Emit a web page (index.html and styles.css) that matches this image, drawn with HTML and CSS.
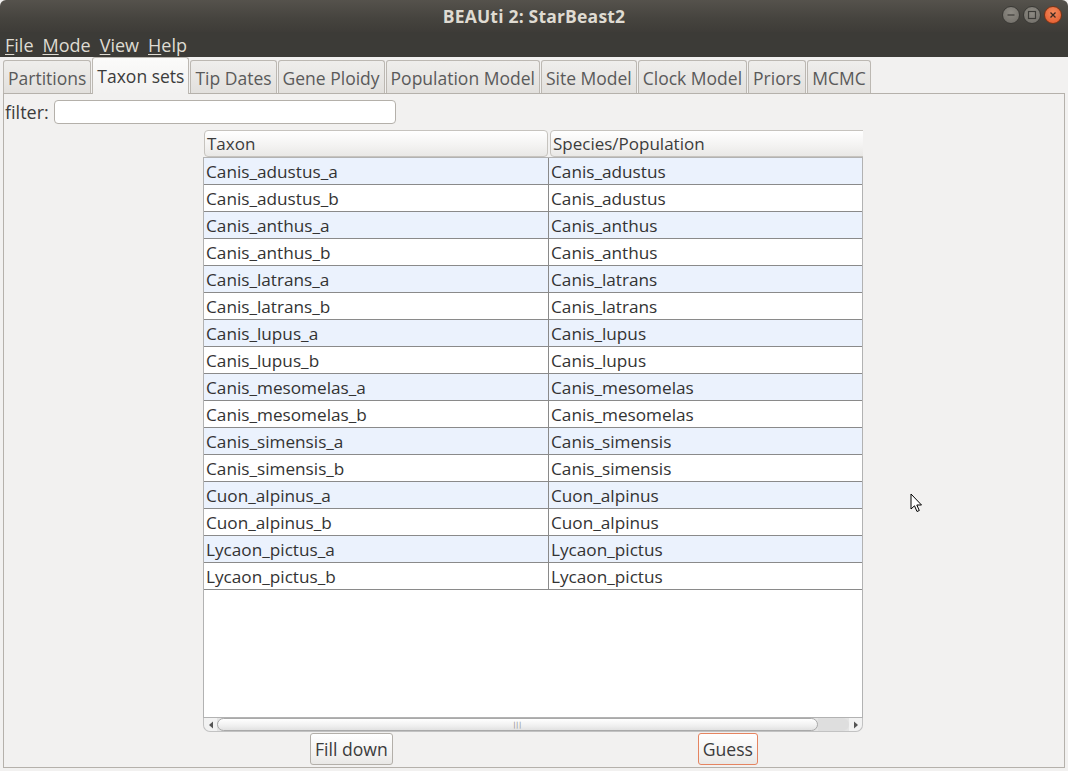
FILE: index.html
```html
<!DOCTYPE html>
<html>
<head>
<meta charset="utf-8">
<title>BEAUti 2: StarBeast2</title>
<link rel="stylesheet" href="styles.css">
</head>
<body>
<div class="window">
  <div class="titlebar">
    <span class="title">BEAUti 2: StarBeast2</span>
    <div class="wm-buttons">
      <span class="wm-btn wm-min"><svg width="16" height="16" viewBox="0 0 16 16"><line x1="4.5" y1="8" x2="11.5" y2="8" stroke="#3c3b37" stroke-width="1.2"/></svg></span>
      <span class="wm-btn wm-max"><svg width="16" height="16" viewBox="0 0 16 16"><rect x="4.5" y="4.5" width="7" height="7" fill="none" stroke="#3c3b37" stroke-width="1.2"/></svg></span>
      <span class="wm-btn wm-close"><svg width="16" height="16" viewBox="0 0 16 16"><path d="M5.5 5.5 L10.5 10.5 M10.5 5.5 L5.5 10.5" stroke="#3c2a22" stroke-width="1.3"/></svg></span>
    </div>
  </div>
  <div class="menubar">
    <span class="menu"><u>F</u>ile</span>
    <span class="menu"><u>M</u>ode</span>
    <span class="menu"><u>V</u>iew</span>
    <span class="menu"><u>H</u>elp</span>
  </div>
  <div class="tabs">
    <span class="tab">Partitions</span>
    <span class="tab tab-active">Taxon sets</span>
    <span class="tab">Tip Dates</span>
    <span class="tab">Gene Ploidy</span>
    <span class="tab">Population Model</span>
    <span class="tab">Site Model</span>
    <span class="tab">Clock Model</span>
    <span class="tab">Priors</span>
    <span class="tab">MCMC</span>
  </div>
  <div class="panel">
    <div class="filter-row">
      <span class="filter-label">filter:</span>
      <span class="filter-input"></span>
    </div>
    <div class="table">
      <div class="thead">
        <div class="th th-taxon">Taxon</div>
        <div class="th th-species">Species/Population</div>
      </div>
      <div class="viewport">
        <div class="row odd"><div class="cell c1">Canis_adustus_a</div><div class="cell c2">Canis_adustus</div></div>
        <div class="row"><div class="cell c1">Canis_adustus_b</div><div class="cell c2">Canis_adustus</div></div>
        <div class="row odd"><div class="cell c1">Canis_anthus_a</div><div class="cell c2">Canis_anthus</div></div>
        <div class="row"><div class="cell c1">Canis_anthus_b</div><div class="cell c2">Canis_anthus</div></div>
        <div class="row odd"><div class="cell c1">Canis_latrans_a</div><div class="cell c2">Canis_latrans</div></div>
        <div class="row"><div class="cell c1">Canis_latrans_b</div><div class="cell c2">Canis_latrans</div></div>
        <div class="row odd"><div class="cell c1">Canis_lupus_a</div><div class="cell c2">Canis_lupus</div></div>
        <div class="row"><div class="cell c1">Canis_lupus_b</div><div class="cell c2">Canis_lupus</div></div>
        <div class="row odd"><div class="cell c1">Canis_mesomelas_a</div><div class="cell c2">Canis_mesomelas</div></div>
        <div class="row"><div class="cell c1">Canis_mesomelas_b</div><div class="cell c2">Canis_mesomelas</div></div>
        <div class="row odd"><div class="cell c1">Canis_simensis_a</div><div class="cell c2">Canis_simensis</div></div>
        <div class="row"><div class="cell c1">Canis_simensis_b</div><div class="cell c2">Canis_simensis</div></div>
        <div class="row odd"><div class="cell c1">Cuon_alpinus_a</div><div class="cell c2">Cuon_alpinus</div></div>
        <div class="row"><div class="cell c1">Cuon_alpinus_b</div><div class="cell c2">Cuon_alpinus</div></div>
        <div class="row odd"><div class="cell c1">Lycaon_pictus_a</div><div class="cell c2">Lycaon_pictus</div></div>
        <div class="row"><div class="cell c1">Lycaon_pictus_b</div><div class="cell c2">Lycaon_pictus</div></div>
      </div>
      <div class="hscroll">
        <span class="sb-arrow sb-left"><svg width="6" height="8" viewBox="0 0 6 8"><path d="M5 0.5 L1 4 L5 7.5 Z" fill="#555"/></svg></span>
        <span class="sb-thumb"><span class="grip">|||</span></span>
        <span class="sb-track"></span>
        <span class="sb-arrow sb-right"><svg width="6" height="8" viewBox="0 0 6 8"><path d="M1 0.5 L5 4 L1 7.5 Z" fill="#555"/></svg></span>
      </div>
    </div>
    <div class="buttons">
      <span class="btn">Fill down</span>
      <span class="btn btn-focus">Guess</span>
    </div>
  </div>
  <svg class="cursor" width="14" height="22" viewBox="0 0 14 22"><path d="M1 1 L1 16 L4.5 12.8 L7 18.5 L9.3 17.5 L6.8 12 L11.5 12 Z" fill="#fff" stroke="#000" stroke-width="1" stroke-linejoin="round"/></svg>
</div>
</body>
</html>
```

FILE: styles.css
```css
html, body {
  margin: 0;
  padding: 0;
  background: #f2f1f0;
}

.window {
  position: relative;
  width: 1068px;
  height: 771px;
  display: flex;
  flex-direction: column;
  background: #f2f1f0;
  font-family: "Open Sans", "DejaVu Sans", sans-serif;
  overflow: hidden;
}

.titlebar {
  position: relative;
  height: 32px;
  flex: none;
  background: linear-gradient(#55524c, #45433e 60%, #3e3c38);
  border-radius: 6px 6px 0 0;
  display: flex;
  align-items: center;
  justify-content: center;
}

.title {
  color: #dfdbd2;
  font-weight: bold;
  font-size: 17.5px;
  letter-spacing: 0.2px;
}

.wm-buttons {
  position: absolute;
  right: 6px;
  top: 6px;
  display: flex;
  gap: 3px;
}

.wm-btn {
  width: 18px;
  height: 18px;
  border-radius: 50%;
  display: flex;
  align-items: center;
  justify-content: center;
  box-sizing: border-box;
}

.wm-min, .wm-max {
  background: radial-gradient(circle at 50% 35%, #8e8b84, #6f6c66);
  border: 1px solid #3a3935;
}

.wm-close {
  background: radial-gradient(circle at 50% 35%, #f48a5c, #e2572a);
  border: 1px solid #7a3416;
}

.menubar {
  height: 25px;
  flex: none;
  background: #3c3b37;
  display: flex;
  align-items: center;
  padding-left: 5px;
  gap: 9px;
}

.menu {
  color: #dfdbd2;
  font-size: 18px;
  line-height: 20px;
}

.menu u {
  text-decoration-thickness: 1px;
  text-underline-offset: 2px;
}

.tabs {
  height: 36px;
  flex: none;
  display: flex;
  align-items: flex-end;
  padding-left: 3px;
  position: relative;
  z-index: 1;
}

.tab {
  height: 33px;
  box-sizing: border-box;
  margin-right: 1px;
  padding: 2px 4px 0 4px;
  border: 1px solid #bcb8b2;
  border-bottom: none;
  border-radius: 3px 3px 0 0;
  background: linear-gradient(#efeeec, #e2e0dd);
  color: #5a5a5a;
  font-size: 17.5px;
  display: flex;
  align-items: center;
}

.tab-active {
  height: 37px;
  margin-bottom: -1px;
  background: linear-gradient(#fbfbfa, #f2f1f0);
  color: #3c3c3c;
  padding-top: 0;
}

.panel {
  flex: 1;
  margin: 0 3px 3px 3px;
  border: 1px solid #b5b1ab;
  display: flex;
  flex-direction: column;
  padding: 0 1px;
}

.filter-row {
  display: flex;
  align-items: center;
  margin-top: 6px;
  height: 24px;
  gap: 5px;
}

.filter-label {
  font-size: 18px;
  color: #3c3c3c;
}

.filter-input {
  width: 342px;
  height: 24px;
  box-sizing: border-box;
  border: 1px solid #b4b0aa;
  border-radius: 4px;
  background: #fff;
}

.table {
  width: 660px;
  margin-top: 6px;
  margin-left: 198px;
  display: flex;
  flex-direction: column;
}

.thead {
  height: 27px;
  display: flex;
  gap: 2px;
  padding-left: 1px;
  overflow: hidden;
}

.th {
  height: 27px;
  box-sizing: border-box;
  border: 1px solid #c6c3be;
  border-radius: 4px;
  background: linear-gradient(#ffffff, #f3f2f1 60%, #e9e8e6);
  color: #3c3c3c;
  font-size: 17px;
  padding-left: 2px;
  display: flex;
  align-items: center;
}

.th-taxon {
  width: 344px;
  flex: none;
}

.th-species {
  flex: 1;
  margin-right: -4px;
}

.viewport {
  height: 561px;
  box-sizing: border-box;
  border: 1px solid #b2b2b2;
  background: #fff;
}

.row {
  height: 27px;
  box-sizing: border-box;
  border-bottom: 1px solid #8a8a8a;
  display: flex;
  background: #fff;
}

.row.odd {
  background: #ebf2fd;
}

.cell {
  font-size: 17.2px;
  color: #333;
  display: flex;
  align-items: center;
  padding-left: 2px;
  white-space: nowrap;
}

.c1 {
  width: 345px;
  flex: none;
  box-sizing: border-box;
  border-right: 1px solid #8a8a8a;
}

.c2 {
  flex: 1;
}

.hscroll {
  height: 14px;
  display: flex;
  align-items: center;
  border: 1px solid #c2c2c2;
  border-top: none;
  border-radius: 0 0 7px 7px;
  box-sizing: border-box;
  background: #e4e4e4;
}

.sb-arrow {
  width: 13px;
  height: 13px;
  display: flex;
  align-items: center;
  justify-content: center;
  background: #f2f2f2;
  flex: none;
}

.sb-left {
  border-radius: 0 0 0 7px;
}

.sb-right {
  border-radius: 0 0 7px 0;
}

.sb-thumb {
  width: 601px;
  height: 13px;
  box-sizing: border-box;
  border: 1px solid #a9a9a9;
  border-radius: 7px;
  background: linear-gradient(#ffffff, #f0f0f0 60%, #e2e2e2);
  display: flex;
  align-items: center;
  justify-content: center;
  flex: none;
}

.grip {
  font-size: 7px;
  color: #8a8a8a;
  letter-spacing: 0.5px;
  font-family: "DejaVu Sans", sans-serif;
}

.sb-track {
  flex: 1;
  height: 13px;
  background: #dedede;
  border-radius: 0 7px 7px 0;
}

.buttons {
  margin-top: 1px;
  display: flex;
  justify-content: space-evenly;
}

.btn {
  height: 32px;
  box-sizing: border-box;
  border: 1px solid #b3afa9;
  border-radius: 3px;
  background: linear-gradient(#ffffff, #f4f3f2 60%, #e9e8e6);
  color: #3c3c3c;
  font-size: 17.6px;
  padding: 0 4px;
  display: flex;
  align-items: center;
}

.btn-focus {
  border-color: #e58460;
}

.cursor {
  position: absolute;
  left: 910px;
  top: 493px;
}
```
